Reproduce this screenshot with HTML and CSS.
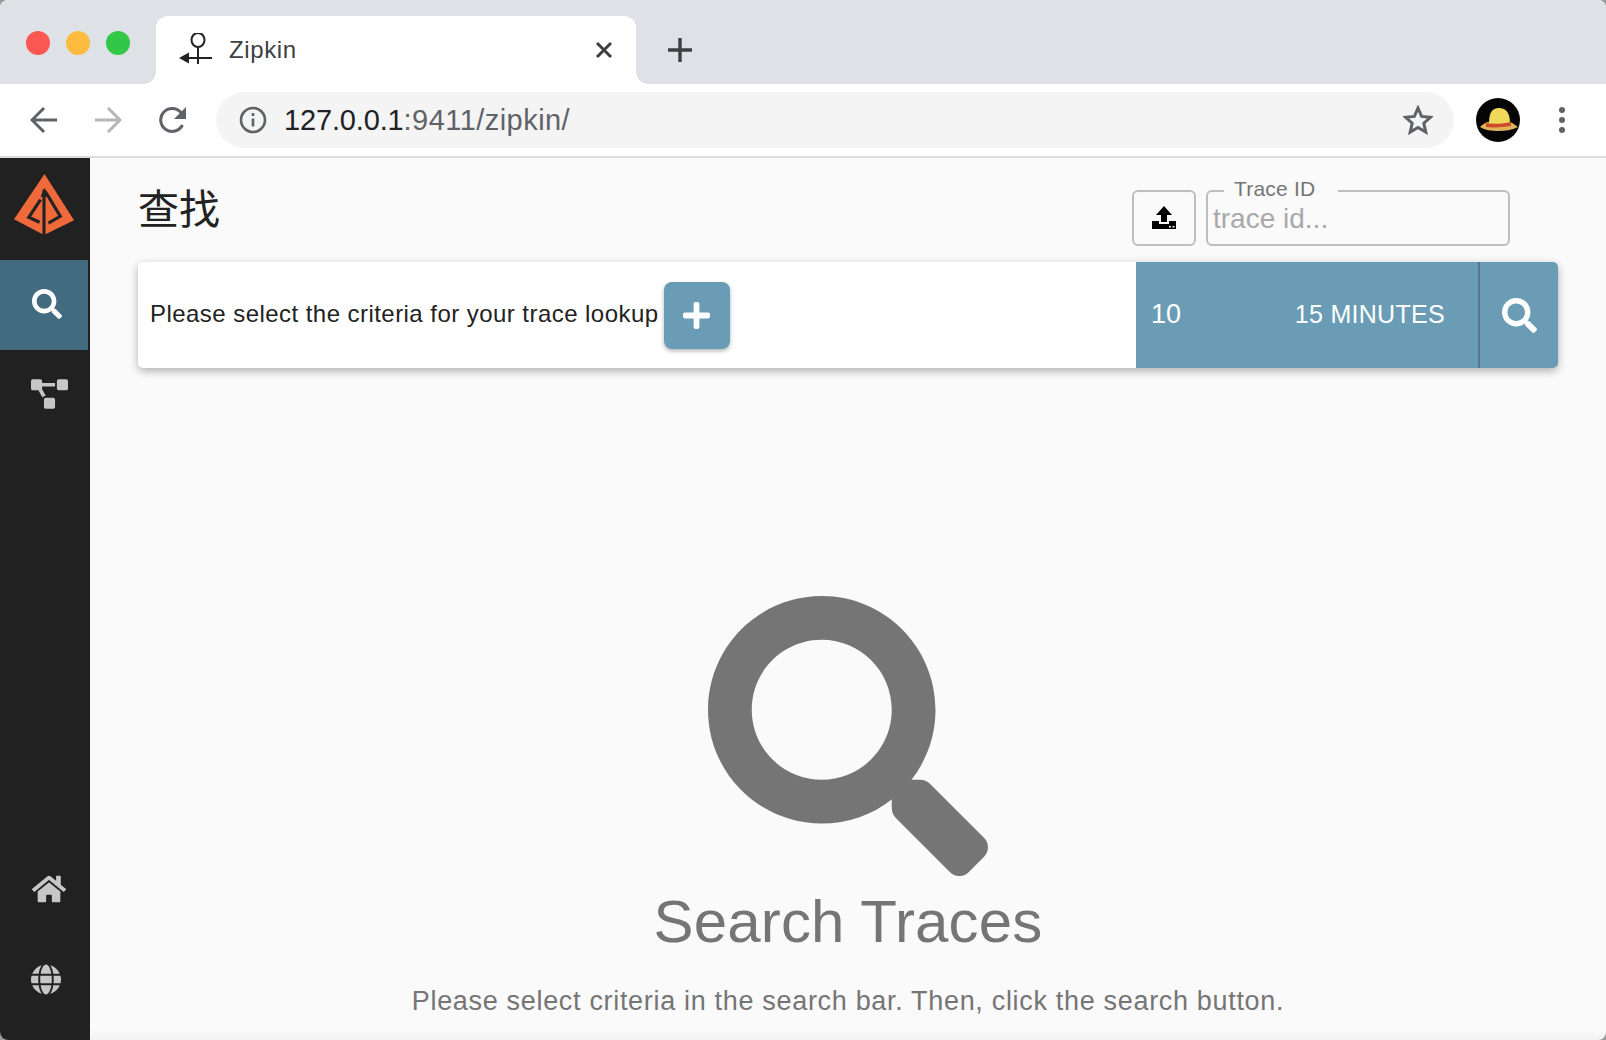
FILE: index.html
```html
<!DOCTYPE html>
<html lang="en">
<head>
    <meta charset="UTF-8">
    <meta name="viewport" content="width=device-width, initial-scale=1.0">
    <title>Zipkin</title>
    <link rel="stylesheet" href="styles.css">
</head>
<body>
    <div class="window">
        <!-- browser chrome -->
        <div class="tabstrip">
            <div class="lights">
                <span class="light red"></span>
                <span class="light yellow"></span>
                <span class="light green"></span>
            </div>
            <div class="tab">
                <svg class="favicon" viewBox="0 0 34 34" fill="none" stroke="#222" stroke-width="2">
                    <ellipse cx="19" cy="7" rx="6.500" ry="7"/>
                    <path d="M19 14v17M6 25h27"/>
                    <path d="M0 25l10-5.500v11z" fill="#222" stroke="none"/>
                </svg>
                <span class="tab-title">Zipkin</span>
                <svg class="tab-close" viewBox="0 0 18 18" stroke="#3c4043" stroke-width="3"><path d="M2 2l14 14M16 2L2 16"/></svg>
            </div>
            <svg class="new-tab" viewBox="0 0 26 26" stroke="#3c4043" stroke-width="3.4"><path d="M13 1v24M1 13h24"/></svg>
        </div>
        <div class="toolbar">
            <svg class="nav-icon" viewBox="0 0 28 28" fill="none" stroke="#5f6368" stroke-width="3"><path d="M27 14H3M14 2L2 14l12 12"/></svg>
            <svg class="nav-icon" viewBox="0 0 28 28" fill="none" stroke="#b4b6b9" stroke-width="3"><path d="M1 14h24M14 2l12 12-12 12"/></svg>
            <svg class="nav-icon reload" viewBox="0 0 28 28" fill="none" stroke="#5f6368" stroke-width="3"><path d="M23.500 19A11.500 11.500 0 1 1 22 6.500"/><path d="M27 1v12H15z" fill="#5f6368" stroke="none"/></svg>
            <div class="omnibox">
                <svg class="info-icon" viewBox="0 0 28 28" fill="none" stroke="#5f6368" stroke-width="2.6">
                    <circle cx="14" cy="14" r="12"/>
                    <path d="M14 12.500v8M14 7v3"/>
                </svg>
                <span class="url"><b>127.0.0.1</b>:9411/zipkin/</span>
                <svg class="star" viewBox="0 0 30 30" fill="none" stroke="#5f6368" stroke-width="3" stroke-linejoin="miter"><path d="M15 3l3.600 8.400 9 .8-6.800 6 2 8.900L15 22.400l-7.800 4.700 2-8.900-6.800-6 9-.8z"/></svg>
            </div>
            <svg class="avatar" viewBox="0 0 44 44">
                <circle cx="22" cy="22" r="22" fill="#050505"/>
                <path d="M4 29c3-3 6-5 9-5h20c3 0 6 3 9 5-6 3-13 4-20 4S9 32 4 29z" fill="#e2b45a"/>
                <path d="M13 25c0-10 3-15 10-15s11 5 11 15z" fill="#f0d85a"/>
                <path d="M10 25c8 2 16 1 25-1v4c-8 1-17 2-25 1z" fill="#cf4a2a"/>
            </svg>
            <div class="menu-dots"><i></i><i></i><i></i></div>
        </div>

        <!-- zipkin app -->
        <div class="app">
            <nav class="sidebar">
                <div class="logo">
                    <svg viewBox="0 0 62 62">
                        <path d="M31 0L61 47 30.500 62 0 46z" fill="#f0693a"/>
                        <path d="M31 14l4 9h-8z" fill="#222"/>
                        <g fill="none" stroke="#222" stroke-width="3.200">
                            <path d="M30.500 16v46"/>
                            <path d="M27 26L15 44l11 5"/>
                            <path d="M32 18l15 25-12 7"/>
                        </g>
                    </svg>
                </div>
                <a class="nav-item active">
                    <svg class="fa-search" viewBox="0 0 512 512"><path d="M505 442.700L405.300 343c-4.500-4.500-10.600-7-17-7H372c27.600-35.300 44-79.700 44-128C416 93.100 322.900 0 208 0S0 93.100 0 208s93.100 208 208 208c48.300 0 92.700-16.400 128-44v16.300c0 6.400 2.500 12.500 7 17l99.700 99.700c9.400 9.400 24.600 9.400 33.900 0l28.300-28.300c9.400-9.400 9.400-24.600.1-34zM208 336c-70.700 0-128-57.200-128-128 0-70.700 57.200-128 128-128 70.700 0 128 57.200 128 128 0 70.700-57.200 128-128 128z"/></svg>
                </a>
                <a class="nav-item">
                    <svg class="fa-diagram" viewBox="0 0 640 512"><path d="M384 320H256c-17.670 0-32 14.330-32 32v128c0 17.670 14.330 32 32 32h128c17.670 0 32-14.330 32-32V352c0-17.670-14.330-32-32-32zM192 32c0-17.670-14.330-32-32-32H32C14.330 0 0 14.330 0 32v128c0 17.670 14.330 32 32 32h95.720l73.160 128.040C211.980 300.980 232.400 288 256 288h.28L192 175.510V128h224V64H192V32zM608 0H480c-17.670 0-32 14.330-32 32v128c0 17.670 14.330 32 32 32h128c17.670 0 32-14.330 32-32V32c0-17.670-14.330-32-32-32z"/></svg>
                </a>
                <div class="sidebar-bottom">
                    <a class="nav-item">
                        <svg class="fa-home" viewBox="0 0 576 512"><path d="M280.370 148.260L96 300.110V464a16 16 0 0 0 16 16l112.060-.29a16 16 0 0 0 15.920-16V368a16 16 0 0 1 16-16h64a16 16 0 0 1 16 16v95.640a16 16 0 0 0 16 16.050L464 480a16 16 0 0 0 16-16V300L295.670 148.260a12.190 12.190 0 0 0-15.300 0zM571.600 251.470L488 182.560V44.050a12 12 0 0 0-12-12h-56a12 12 0 0 0-12 12v72.610L318.470 43a48 48 0 0 0-61 0L4.340 251.470a12 12 0 0 0-1.600 16.900l25.500 31A12 12 0 0 0 45.150 301l235.220-193.740a12.190 12.190 0 0 1 15.300 0L530.900 301a12 12 0 0 0 16.900-1.600l25.500-31a12 12 0 0 0-1.700-16.930z"/></svg>
                    </a>
                    <a class="nav-item">
                        <svg class="fa-globe" viewBox="0 0 496 512"><path d="M336.500 160C322 70.700 287.800 8 248 8s-74 62.700-88.500 152h177zM152 256c0 22.200 1.200 43.500 3.300 64h185.300c2.100-20.500 3.300-41.800 3.300-64s-1.200-43.500-3.300-64H155.300c-2.100 20.500-3.300 41.800-3.300 64zm324.700-96c-28.600-67.900-86.500-120.400-158-141.600 24.400 33.800 41.200 84.700 50 141.600h108zM177.200 18.400C105.800 39.600 47.800 92.100 19.300 160h108c8.700-56.900 25.500-107.800 49.900-141.600zM487.400 192H372.700c2.100 21 3.300 42.500 3.300 64s-1.200 43-3.300 64h114.600c5.500-20.500 8.600-41.800 8.600-64s-3.100-43.500-8.500-64zM120 256c0-21.500 1.200-43 3.300-64H8.600C3.200 212.500 0 233.800 0 256s3.200 43.500 8.600 64h114.600c-2-21-3.200-42.500-3.200-64zm39.500 96c14.500 89.300 48.700 152 88.500 152s74-62.700 88.500-152h-177zm159.300 141.600c71.400-21.200 129.400-73.700 158-141.600h-108c-8.800 56.900-25.600 107.800-50 141.600zM19.300 352c28.600 67.900 86.500 120.400 158 141.600-24.400-33.800-41.200-84.700-50-141.600h-108z"/></svg>
                    </a>
                </div>
            </nav>

            <main class="main">
                <header class="page-header">
                    <h1>查找</h1>
                    <div class="trace-tools">
                        <button class="upload-btn">
                            <svg viewBox="0 0 24 24"><path d="M12 0l8 9h-5v7H9V9H4zM0 15h7v3h10v-3h7v8H0z"/><path d="M17 20h2v1.500h-2zM20.500 20h2v1.500h-2z" fill="#fff"/></svg>
                        </button>
                        <fieldset class="trace-field">
                            <legend>Trace ID</legend>
                            <input type="text" placeholder="trace id...">
                        </fieldset>
                    </div>
                </header>

                <section class="search-bar">
                    <div class="criteria">
                        <span class="criteria-label">Please select the criteria for your trace lookup</span>
                        <button class="add-btn">
                            <svg viewBox="0 0 448 512"><path d="M416 208H272V64c0-17.670-14.330-32-32-32h-32c-17.670 0-32 14.330-32 32v144H32c-17.670 0-32 14.330-32 32v32c0 17.670 14.330 32 32 32h144v144c0 17.670 14.330 32 32 32h32c17.670 0 32-14.330 32-32V304h144c17.670 0 32-14.330 32-32v-32c0-17.670-14.330-32-32-32z"/></svg>
                        </button>
                    </div>
                    <div class="search-opts">
                        <span class="limit">10</span>
                        <span class="lookback">15 MINUTES</span>
                    </div>
                    <button class="search-btn">
                        <svg viewBox="0 0 512 512"><path d="M505 442.700L405.300 343c-4.500-4.500-10.600-7-17-7H372c27.600-35.300 44-79.700 44-128C416 93.100 322.900 0 208 0S0 93.100 0 208s93.100 208 208 208c48.300 0 92.700-16.400 128-44v16.300c0 6.400 2.500 12.500 7 17l99.700 99.700c9.400 9.400 24.600 9.400 33.900 0l28.300-28.300c9.400-9.400 9.400-24.600.1-34zM208 336c-70.700 0-128-57.200-128-128 0-70.700 57.200-128 128-128 70.700 0 128 57.200 128 128 0 70.700-57.200 128-128 128z"/></svg>
                    </button>
                </section>

                <section class="empty">
                    <svg class="empty-icon" viewBox="0 0 512 512"><path d="M505 442.700L405.300 343c-4.500-4.500-10.600-7-17-7H372c27.600-35.300 44-79.700 44-128C416 93.100 322.900 0 208 0S0 93.100 0 208s93.100 208 208 208c48.300 0 92.700-16.400 128-44v16.300c0 6.400 2.500 12.500 7 17l99.700 99.700c9.400 9.400 24.600 9.400 33.900 0l28.300-28.300c9.400-9.400 9.400-24.600.1-34zM208 336c-70.700 0-128-57.200-128-128 0-70.700 57.200-128 128-128 70.700 0 128 57.200 128 128 0 70.700-57.200 128-128 128z"/></svg>
                    <h2>Search Traces</h2>
                    <p>Please select criteria in the search bar. Then, click the search button.</p>
                </section>
            </main>
        </div>
    </div>
</body>
</html>
```

FILE: styles.css
```css
* {
    box-sizing: border-box;
}
html, body {
    height: 100%;
}
body {
    margin: 0;
    overflow: hidden;
    background: #9a9a9a;
    font-family: "Liberation Sans", Arial, "Noto Sans CJK SC", sans-serif;
}
svg {
    display: block;
}
.window {
    display: flex;
    flex-direction: column;
    height: 100%;
    overflow: hidden;
    border-radius: 8px;
    background: #fafafa;
}

/* browser chrome */
.tabstrip {
    display: flex;
    align-items: flex-end;
    flex: 0 0 84px;
    background: #dee1e5;
}
.lights {
    display: flex;
    gap: 16px;
    align-self: flex-start;
    width: 156px;
    padding: 31px 0 0 26px;
}
.light {
    width: 24px;
    height: 24px;
    border-radius: 50%;
}
.red { background: #fc5753; }
.yellow { background: #fdbc40; }
.green { background: #33c748; }
.tab {
    position: relative;
    display: flex;
    align-items: center;
    width: 480px;
    height: 68px;
    padding: 0 23px 0 23px;
    background: #fff;
    border-radius: 12px 12px 0 0;
}
.tab::before,
.tab::after {
    content: "";
    position: absolute;
    bottom: 0;
    width: 12px;
    height: 12px;
}
.tab::before {
    left: -12px;
    background: radial-gradient(circle at 0 0, #dee1e5 11.500px, #fff 12px);
}
.tab::after {
    right: -12px;
    background: radial-gradient(circle at 100% 0, #dee1e5 11.500px, #fff 12px);
}
.favicon {
    width: 34px;
    height: 34px;
}
.tab-title {
    margin-left: 16px;
    font-size: 24px;
    letter-spacing: 0.6px;
    color: #3c4043;
}
.tab-close {
    width: 18px;
    height: 18px;
    margin-left: auto;
}
.new-tab {
    align-self: center;
    width: 26px;
    height: 26px;
    margin: 16px 0 0 31px;
}
.toolbar {
    display: flex;
    align-items: center;
    flex: 0 0 74px;
    padding: 0 0 0 30px;
    background: #fff;
    border-bottom: 2px solid #dcdcdc;
}
.nav-icon {
    width: 28px;
    height: 28px;
    margin-right: 36px;
}
.nav-icon.reload {
    margin-left: 1px;
    margin-right: 35px;
}
.omnibox {
    display: flex;
    align-items: center;
    width: 1238px;
    height: 56px;
    margin-left: -6px;
    padding: 0 21px 0 23px;
    background: #f4f4f5;
    border-radius: 28px;
}
.info-icon {
    width: 28px;
    height: 28px;
}
.url {
    margin-left: 17px;
    font-size: 29px;
    letter-spacing: 0.45px;
    color: #5f6368;
}
.url b {
    font-weight: normal;
    letter-spacing: -0.15px;
    color: #202124;
}
.star {
    width: 30px;
    height: 30px;
    margin-left: auto;
}
.avatar {
    width: 44px;
    height: 44px;
    margin-left: 22px;
}
.menu-dots {
    display: flex;
    flex-direction: column;
    gap: 4px;
    margin-left: 39px;
}
.menu-dots i {
    width: 6px;
    height: 6px;
    border-radius: 50%;
    background: #5f6368;
}

/* app */
.app {
    display: flex;
    flex: 1;
    min-height: 0;
}
.sidebar {
    display: flex;
    flex-direction: column;
    flex: 0 0 90px;
    padding-right: 2px;
    background: #212121;
}
.logo {
    padding: 16px 0 0 14px;
    height: 102px;
}
.logo svg {
    width: 61px;
    height: 61px;
}
.nav-item {
    display: flex;
    align-items: center;
    justify-content: center;
    height: 90px;
    color: #c6c6c6;
}
.nav-item svg {
    fill: currentColor;
}
.nav-item.active {
    background: #436b80;
    color: #fff;
}
.fa-search {
    width: 30px;
    height: 30px;
    margin: -2px 0 0 5px;
}
.fa-diagram {
    width: 37px;
    height: 30px;
    margin: -2px 0 0 11px;
}
.fa-home {
    width: 34px;
    height: 32px;
    margin-left: 10px;
}
.fa-globe {
    width: 30px;
    height: 31px;
    margin-left: 4px;
}
.sidebar-bottom {
    margin-top: auto;
    padding-bottom: 16px;
}
.main {
    flex: 1;
    min-width: 0;
    padding: 0 48px;
    box-shadow: inset 0 -16px 14px -14px rgba(0, 0, 0, 0.05);
}
.page-header {
    display: flex;
    justify-content: space-between;
    height: 104px;
}
h1 {
    margin: 28px 0 0;
    font-size: 41px;
    font-weight: normal;
    line-height: 48px;
    color: #222;
}
.trace-tools {
    display: flex;
    gap: 10px;
    margin: 32px 48px 0 0;
}
.upload-btn {
    display: flex;
    align-items: center;
    justify-content: center;
    width: 64px;
    height: 56px;
    padding: 0;
    background: transparent;
    border: 2px solid #bdbdbd;
    border-radius: 6px;
}
.upload-btn svg {
    width: 24px;
    height: 24px;
}
.trace-field {
    width: 304px;
    height: 69px;
    margin: -13px 0 0;
    padding: 0 5px;
    border: 2px solid #bdbdbd;
    border-radius: 6px;
}
.trace-field legend {
    margin-left: 11px;
    padding: 0 23px 4px 10px;
    font-size: 21px;
    line-height: 24px;
    letter-spacing: 0.2px;
    color: #757575;
}
.trace-field input {
    display: block;
    width: 100%;
    margin-top: -2px;
    padding: 0;
    border: 0;
    outline: 0;
    background: transparent;
    font: 28px "Liberation Sans", Arial, sans-serif;
}
.trace-field input::placeholder {
    color: #a9a9a9;
    opacity: 1;
}
.search-bar {
    display: flex;
    height: 106px;
    background: #fff;
    border-radius: 5px;
    box-shadow: 0 3px 8px rgba(0, 0, 0, 0.3);
    overflow: hidden;
}
.criteria {
    display: flex;
    align-items: center;
    flex: 0 0 998px;
    padding-left: 12px;
    font-size: 24px;
    letter-spacing: 0.45px;
    color: #222;
}
.criteria-label {
    margin-bottom: 2px;
}
.add-btn {
    display: flex;
    align-items: center;
    justify-content: center;
    width: 66px;
    height: 67px;
    margin-left: 5px;
    padding: 0;
    background: #6a9db5;
    border: 0;
    border-radius: 8px;
    box-shadow: 0 2px 4px rgba(0, 0, 0, 0.3);
}
.add-btn svg {
    width: 27px;
    height: 31px;
    fill: #fff;
}
.search-opts {
    display: flex;
    align-items: center;
    justify-content: space-between;
    flex: 0 0 342px;
    padding: 0 33px 2px 15px;
    background: #6a9db5;
    color: #fff;
    font-size: 25px;
}
.limit {
    font-size: 27px;
}
.lookback {
    letter-spacing: 0.3px;
}
.search-btn {
    display: flex;
    align-items: center;
    justify-content: center;
    flex: 1;
    padding: 0;
    background: #6a9db5;
    border: 0;
    border-left: 2px solid #55788a;
}
.search-btn svg {
    width: 35px;
    height: 35px;
    fill: #fff;
}
.empty {
    display: flex;
    flex-direction: column;
    align-items: center;
    color: #757575;
}
.empty-icon {
    width: 280px;
    height: 280px;
    margin-top: 228px;
    fill: #757575;
}
h2 {
    margin: 12px 0 0;
    font-size: 60px;
    font-weight: normal;
    line-height: 68px;
    letter-spacing: 0.15px;
}
.empty p {
    margin: 29px 0 0;
    font-size: 27px;
    line-height: 32px;
    letter-spacing: 0.68px;
}
```
